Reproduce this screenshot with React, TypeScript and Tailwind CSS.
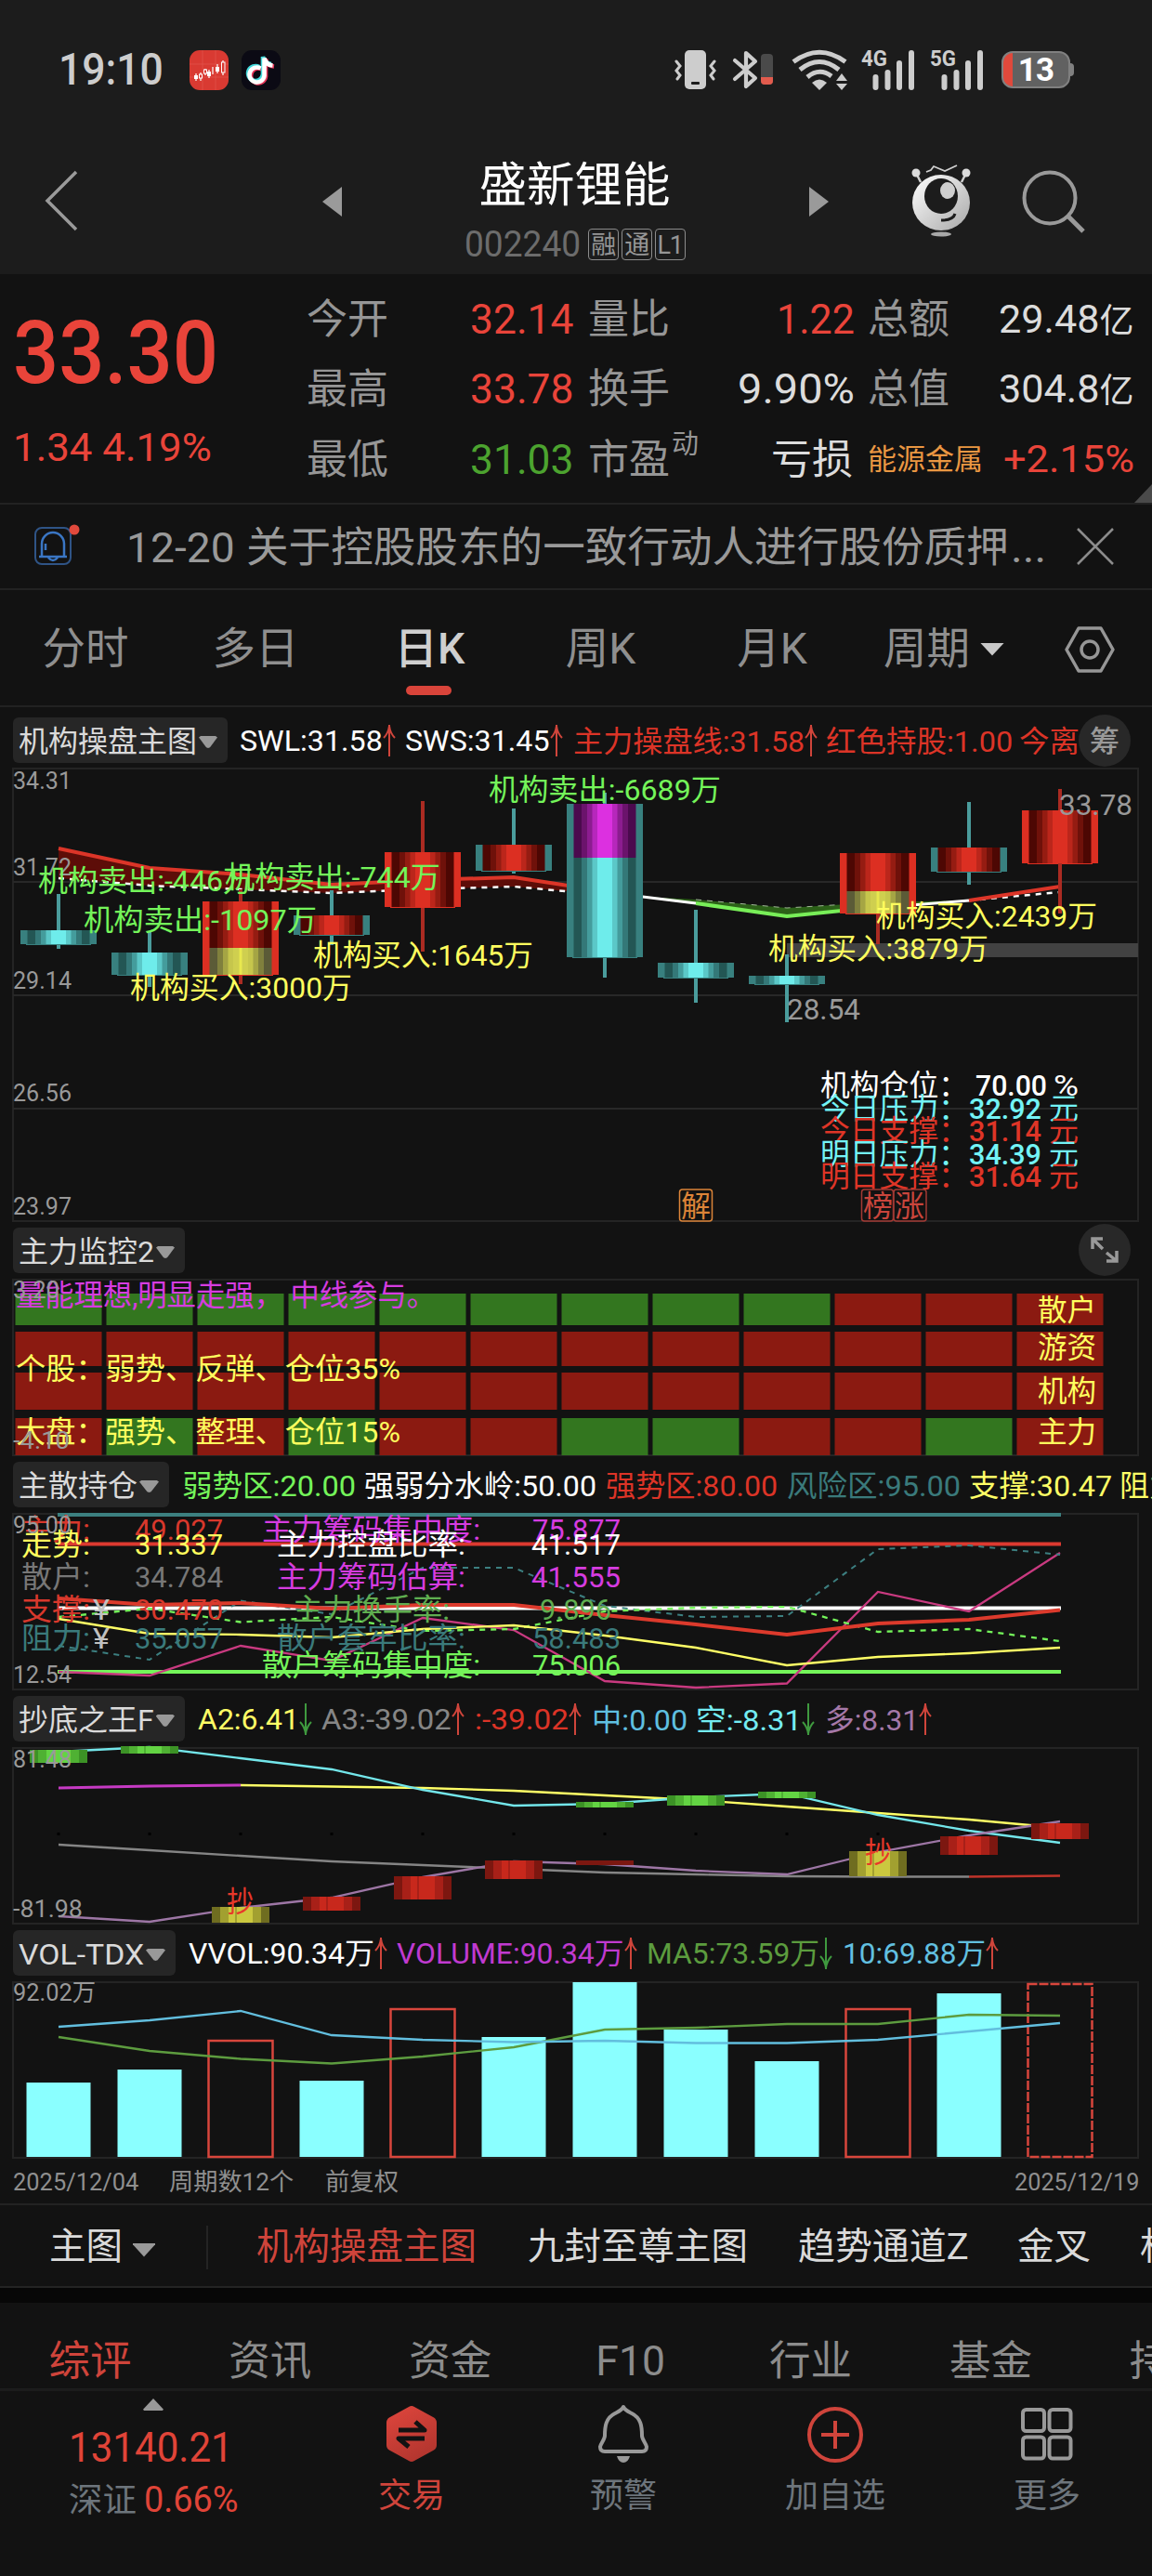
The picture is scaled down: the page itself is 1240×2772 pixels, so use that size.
import { useLayoutEffect, useRef, type ReactNode } from "react";

const XS = [63, 161, 259, 357, 455, 553, 651, 749, 847, 945, 1043, 1141];

/** Text squeezed or stretched horizontally so that it fills the width of its box. */
function Fit({ className = "", children }: { className?: string; children: ReactNode }) {
  const box = useRef<HTMLDivElement>(null);
  const inner = useRef<HTMLSpanElement>(null);
  useLayoutEffect(() => {
    const b = box.current;
    const i = inner.current;
    if (b && i && i.offsetWidth) {
      i.style.transform = `scaleX(${b.clientWidth / i.offsetWidth})`;
    }
  }, []);
  return (
    <div ref={box} className={`shrink-0 whitespace-nowrap ${className}`}>
      <span ref={inner} className="inline-block origin-left">
        {children}
      </span>
    </div>
  );
}

function StatusBar() {
  return (
    <div className="flex h-[150px] items-center pl-[63px] pr-[84px] text-[#cdcdcd]">
      <Fit className="w-[113px] text-[48px] leading-none font-medium">19:10</Fit>
      <svg className="ml-[28px] shrink-0" width="42" height="43" viewBox="0 0 42 43">
        <rect width="42" height="43" rx="11" fill="#d93a32" />
        <path d="M0 15H42M0 29H42M14 0V43M28 0V43" stroke="#e2574e" strokeWidth="0.7" />
        <path d="M5 27h4v4H5zM19 23h4v5h-4zM28 18h4v5h-4z" fill="#fff" />
        <path d="M7 25v8M12 24v9M17 20v7M21 21v9M25 18v8M30 15v10M36 11v16" stroke="#fff" strokeWidth="1.2" />
        <rect x="10.500" y="26" width="3" height="4" fill="#d93a32" stroke="#fff" />
        <rect x="15.500" y="21" width="3" height="4" fill="#d93a32" stroke="#fff" />
        <rect x="34.500" y="13" width="3.500" height="11" fill="#d93a32" stroke="#fff" />
      </svg>
      <svg className="ml-[14px] shrink-0" width="42" height="43" viewBox="0 0 42 43">
        <rect width="42" height="43" rx="11" fill="#0b0a14" />
        <g fill="none" strokeWidth="4.600">
          <path d="M20 19a8 8 0 1 0 4 8V8c1 5 4 7.500 9 8" stroke="#e8375b" transform="translate(2 1.500)" />
          <path d="M20 19a8 8 0 1 0 4 8V8c1 5 4 7.500 9 8" stroke="#43d9dc" transform="translate(-1 -1)" />
          <path d="M20 19a8 8 0 1 0 4 8V8c1 5 4 7.500 9 8" stroke="#fff" transform="translate(.5 .5)" />
        </g>
      </svg>
      <div className="ml-auto flex items-center">
        <svg width="46" height="44" viewBox="0 0 46 44" fill="none" stroke="#cdcdcd" strokeWidth="3" strokeLinecap="round">
          <path d="M2 13l4 5-4 5 4 5-3 4M43 13l-4 5 4 5-4 5 3 4" />
          <rect x="11" y="1" width="23" height="42" rx="5" fill="#cdcdcd" stroke="none" />
          <rect x="18" y="35" width="9" height="3" rx="1" fill="#1c1c1c" stroke="none" />
        </svg>
        <svg className="ml-[16px]" width="46" height="44" viewBox="0 0 46 44" fill="none">
          <path d="M3 12L25 31L15 40V4L25 13L3 32" stroke="#cdcdcd" strokeWidth="4.200" strokeLinejoin="round" strokeLinecap="round" />
          <rect x="31" y="5" width="13" height="33" rx="4" fill="#4a4a4a" />
          <path d="M31 30h13v4a4 4 0 0 1-4 4h-5a4 4 0 0 1-4-4z" fill="#e25b4d" />
        </svg>
        <svg className="ml-[18px]" width="62" height="44" viewBox="0 0 62 44" fill="none" stroke="#cdcdcd" strokeWidth="5">
          <path d="M2 13.500Q30 -7 58 13.500" />
          <path d="M9 22Q30 5 51 22" />
          <path d="M17 30Q30 19 43 29" />
          <path d="M22 36Q30 29 38 36L30 44Z" fill="#cdcdcd" stroke="none" />
          <path d="M48 34l6-8 6 8zM48 37l6 7 6-7z" fill="#cdcdcd" stroke="none" />
        </svg>
        <Signal label="4G" />
        <Signal label="5G" />
        <div className="ml-[16px] flex items-center">
          <div className="flex h-[40px] w-[74px] items-center justify-center overflow-hidden rounded-[12px] border-2 border-[#808080] bg-[linear-gradient(90deg,#e0493c_0_10px,#616161_10px)]">
            <span className="text-[35px] leading-none font-bold tracking-tight text-white">13</span>
          </div>
          <div className="h-[14px] w-[4px] rounded-r bg-[#808080]" />
        </div>
      </div>
    </div>
  );
}

function Signal({ label }: { label: string }) {
  return (
    <svg className="ml-[12px] overflow-visible" width="62" height="44" viewBox="0 0 62 44" fill="#cdcdcd">
      <text x="1" y="18" textLength="28" lengthAdjust="spacingAndGlyphs" className="text-[24px] font-bold">{label}</text>
      <rect x="13.500" y="27" width="6" height="17" rx="3" />
      <rect x="26.500" y="22" width="6" height="22" rx="3" />
      <rect x="39" y="12" width="6" height="32" rx="3" />
      <rect x="52" y="1" width="6" height="43" rx="3" />
    </svg>
  );
}

function Badge({ children }: { children: ReactNode }) {
  return (
    <span className="flex h-[34px] w-[33px] items-center justify-center rounded-[4px] border border-[#8c8c8c] pt-[2px] text-[27px] leading-none tracking-tighter text-[#969696]">
      {children}
    </span>
  );
}

function TitleBar() {
  return (
    <div className="flex h-[145px] items-start">
      <svg className="mt-[33px] ml-[46px]" width="40" height="66" viewBox="0 0 40 66" fill="none" stroke="#9a9a9a" strokeWidth="3.500">
        <path d="M36 2L5 33L36 64" />
      </svg>
      <svg className="mt-[51px] ml-[261px]" width="22" height="32" viewBox="0 0 22 32">
        <path d="M21 0V32L0 16Z" fill="#9a9a9a" />
      </svg>
      <div className="mx-auto flex flex-col items-center pr-[2px]">
        <div className="mt-[23px] text-[51.500px] leading-[54px] text-white">盛新锂能</div>
        <div className="mt-[19px] flex h-[34px] items-center gap-[3px]">
          <Fit className="mr-[5px] w-[125px] text-[38px] leading-none text-[#6c6c6c]">002240</Fit>
          <Badge>融</Badge>
          <Badge>通</Badge>
          <Badge>L1</Badge>
        </div>
      </div>
      <svg className="mt-[51px]" width="22" height="32" viewBox="0 0 22 32">
        <path d="M1 0V32L22 16Z" fill="#9a9a9a" />
      </svg>
      <svg className="mt-[26px] ml-[88px]" width="66" height="80" viewBox="0 0 66 80">
        <defs>
          <linearGradient id="bot" x1="0" y1="0" x2="1" y2="1">
            <stop offset="0" stopColor="#fff" />
            <stop offset="1" stopColor="#a8a8a8" />
          </linearGradient>
        </defs>
        <g fill="none" stroke="#d0d0d0" strokeWidth="2.500">
          <path d="M17 9l5-2 3-4 12 5 13-6" strokeWidth="1.800" />
          <path d="M6 10l5 10M60 10l-5 10" />
        </g>
        <circle cx="6" cy="10" r="4.500" fill="#dcdcdc" />
        <circle cx="60" cy="10" r="4.500" fill="#dcdcdc" />
        <ellipse cx="33" cy="42" rx="31" ry="30" fill="url(#bot)" />
        <ellipse cx="33" cy="35" rx="18" ry="19" fill="#1c1c1c" />
        <ellipse cx="40" cy="29" rx="8" ry="9" fill="#cfcfcf" />
        <path d="M33 61q13 0 15-7" fill="none" stroke="#1c1c1c" strokeWidth="3" />
        <ellipse cx="33" cy="76" rx="11" ry="2.500" fill="#a8a8a8" />
      </svg>
      <svg className="mt-[32px] mr-[71px] ml-[53px]" width="70" height="70" viewBox="0 0 70 70" fill="none" stroke="#9a9a9a" strokeWidth="4">
        <circle cx="31" cy="31" r="27.500" />
        <path d="M50 50L67 67" strokeWidth="5" />
      </svg>
    </div>
  );
}

const RED = "text-[#e9443a]";
const WHT = "text-[#dcdcdc]";

function QuoteRow({ children }: { children: ReactNode }) {
  return <div className="flex h-[75.500px] items-center leading-none">{children}</div>;
}

function Quote() {
  return (
    <div className="relative flex h-[248px] border-b-2 border-[#222]">
      <div className="w-[330px] pl-[14px]">
        <Fit className={`mt-[39px] w-[221px] text-[94px] leading-[93px] font-medium ${RED}`}>33.30</Fit>
        <Fit className={`mt-[33px] w-[214px] text-[43px] leading-[43px] ${RED}`}>1.34 4.19%</Fit>
      </div>
      <div className="flex-1 pt-[11px] text-[44px] text-[#969696]">
        <QuoteRow>
          <span className="w-[176px]">今开</span>
          <Fit className={`w-[112px] ${RED}`}>32.14</Fit>
          <span className="ml-[15px] w-[203px]">量比</span>
          <Fit className={`w-[84px] ${RED}`}>1.22</Fit>
          <span className="ml-[14px] w-[141px]">总额</span>
          <Fit className={`w-[146px] text-[42px] ${WHT}`}>
            29.48<span className="text-[36px]">亿</span>
          </Fit>
        </QuoteRow>
        <QuoteRow>
          <span className="w-[176px]">最高</span>
          <Fit className={`w-[112px] ${RED}`}>33.78</Fit>
          <span className="ml-[15px] w-[161px]">换手</span>
          <Fit className={`w-[126px] ${WHT}`}>9.90%</Fit>
          <span className="ml-[14px] w-[141px]">总值</span>
          <Fit className={`w-[146px] text-[42px] ${WHT}`}>
            304.8<span className="text-[36px]">亿</span>
          </Fit>
        </QuoteRow>
        <QuoteRow>
          <span className="w-[176px]">最低</span>
          <Fit className="w-[112px] text-[#4ca32f]">31.03</Fit>
          <span className="ml-[15px] flex w-[197px]">
            市盈<span className="-mt-[9px] ml-[2px] text-[29px]">动</span>
          </span>
          <span className={`w-[90px] ${WHT}`}>亏损</span>
          <span className="ml-[14px] w-[146px] text-[31px] text-[#ea9742]">能源金属</span>
          <Fit className={`w-[141px] text-[40px] ${RED}`}>+2.15%</Fit>
        </QuoteRow>
      </div>
      <div className="absolute right-0 bottom-0 h-[20px] w-[19px] bg-[#4a4a4a] [clip-path:polygon(100%_0,100%_100%,0_100%)]" />
    </div>
  );
}

function Notice() {
  return (
    <div className="flex h-[92px] items-center border-b-2 border-[#222]">
      <svg className="ml-[36px]" width="52" height="50" viewBox="0 0 52 50" fill="none" stroke="#3a76c4" strokeWidth="2.500">
        <rect x="2" y="5" width="38" height="39" rx="7" stroke="#2f5486" strokeWidth="2" />
        <path d="M6 36h30M9 35V22a12 12 0 0 1 24 0v13M16 37q5 6 10 0M13 29v-7" />
        <circle cx="44" cy="7" r="5.500" fill="#e0493c" stroke="none" />
      </svg>
      <div className="ml-[48px] flex items-center pt-[3px] text-[45.600px] leading-none text-[#999]">
        <Fit className="w-[117px] text-[45px]">12-20</Fit>
        <span className="ml-[12px]">关于控股股东的一致行动人进行股份质押</span>
        <Fit className="ml-[2px] w-[38px]">...</Fit>
      </div>
      <svg className="ml-[33px]" width="40" height="40" viewBox="0 0 40 40" fill="none" stroke="#8c8c8c" strokeWidth="2.500">
        <path d="M1 1L39 39M39 1L1 39" />
      </svg>
    </div>
  );
}

function PeriodTabs() {
  return (
    <div className="flex h-[126px] items-center border-b-2 border-[#222] pt-[3px] text-[46.500px] leading-none text-[#8f8f8f]">
      <span className="w-[184px] text-center">分时</span>
      <span className="w-[182px] text-center">多日</span>
      <span className="relative w-[193px] text-center font-medium text-[#cfcfcf]">
        日K
        <i className="absolute top-[63px] left-[71px] h-[10px] w-[49px] rounded-full bg-[#d9443a]" />
      </span>
      <span className="w-[175px] text-center">周K</span>
      <span className="w-[194px] text-center">月K</span>
      <span className="ml-[23px] w-[104px]">周期</span>
      <i className="h-[14px] w-[26px] bg-[#c8c8c8] [clip-path:polygon(0_0,100%_0,50%_100%)]" />
      <svg className="ml-[64px]" width="56" height="52" viewBox="0 0 56 52" fill="none" stroke="#969696" strokeWidth="3.500" strokeLinejoin="round">
        <path d="M16 3H40L53 26L40 49H16L3 26Z" />
        <circle cx="28" cy="26" r="9" />
      </svg>
    </div>
  );
}

function Name({ className, children }: { className: string; children: ReactNode }) {
  return (
    <div className={`flex h-[49px] shrink-0 items-center justify-between rounded-[6px] bg-[#262626] pr-[11px] pl-[6px] text-[#dadada] ${className}`}>
      <Fit className="flex-1 pt-[2px]">{children}</Fit>
      <i className="mt-[4px] ml-[2px] h-[13px] w-[21px] bg-[#999] [clip-path:polygon(10%_0,90%_0,100%_12%,60%_95%,50%_100%,40%_95%,0_12%)]" />
    </div>
  );
}

function Arrow({ down = false }: { down?: boolean }) {
  return (
    <svg className={`shrink-0 ${down ? "rotate-180" : ""}`} width="14" height="34" viewBox="0 0 14 34" fill="none" stroke={down ? "#3f9a3f" : "#d0453b"} strokeWidth="2">
      <path d="M7 0V34M1 14Q6 9 7 1Q8 9 13 14" />
    </svg>
  );
}

function HeadRow({ children }: { children: ReactNode }) {
  return <div className="flex h-[49px] w-full items-center pl-[14px] text-[32px] leading-none">{children}</div>;
}

const CYAN = ["#6eeceb", "#5bc8c8", "#449c9c", "#347878", "#235654"];
const REDS = ["#dc2f22", "#bb261b", "#951c12", "#6f110a", "#4d0703"];
const PURP = ["#dc30e0", "#b727bc", "#8c1c90", "#6b136c", "#4b0a4e"];
const GOLD = ["#cfcf4f", "#c6c64c", "#a5a544", "#80803d", "#5b5b37"];

function Shaded({ x, y, h, shades }: { x: number; y: number; h: number; shades: string[] }) {
  return (
    <g>
      {[33.500, 25, 19, 13.500, 8].map((r, i) => (
        <rect key={r} x={x - r} y={y} width={r * 2} height={h} fill={shades[4 - i]} />
      ))}
    </g>
  );
}

type Part = [number, number, string[]];
const CANDLES: { wick: [number, number]; edge: "c" | "r"; parts: Part[] }[] = [
  { wick: [962, 1021], edge: "c", parts: [[1001, 1016, CYAN]] },
  { wick: [1003, 1062], edge: "c", parts: [[1025, 1049, CYAN]] },
  { wick: [957, 1059], edge: "r", parts: [[970, 1020, REDS], [1020, 1049, GOLD]] },
  { wick: [958, 1017], edge: "c", parts: [[985, 1006, REDS]] },
  { wick: [862, 1024], edge: "r", parts: [[917, 976, REDS]] },
  { wick: [870, 940], edge: "c", parts: [[909, 937, REDS]] },
  { wick: [853, 1052], edge: "c", parts: [[865, 923, PURP], [923, 1030, CYAN]] },
  { wick: [979, 1079], edge: "c", parts: [[1036, 1052, CYAN]] },
  { wick: [1027, 1100], edge: "c", parts: [[1050, 1059, CYAN]] },
  { wick: [918, 1016], edge: "r", parts: [[918, 959, REDS], [959, 983, GOLD]] },
  { wick: [863, 952], edge: "c", parts: [[912, 938, REDS]] },
  { wick: [849, 983], edge: "r", parts: [[872, 929, REDS]] },
];

function T({ x, x2, y, c, s = 32, w = 400, children }: { x: number; x2: number; y: number; c: string; s?: number; w?: number; children: string }) {
  return (
    <text x={x} y={y} fill={c} fontSize={s} fontWeight={w} textLength={x2 - x} lengthAdjust="spacingAndGlyphs">
      {children}
    </text>
  );
}

function Axis({ x2 = 77, y, children }: { x2?: number; y: number; children: string }) {
  return <T x={14} x2={x2} y={y} c="#999" s={26}>{children}</T>;
}

function Frame({ top, bottom }: { top: number; bottom: number }) {
  return <rect x="14" y={top} width="1211" height={bottom - top} fill="none" stroke="#242424" strokeWidth="2" />;
}

const line = (ys: number[], from = 0) => ys.map((y, i) => `${XS[from + i]},${y}`).join(" ");

const TRADES: [number, number, number, string, string][] = [
  [526, 776, 861, "#74f55a", "机构卖出:-6689万"],
  [41, 272, 958.500, "#74f55a", "机构卖出:-446万"],
  [242, 474, 954.500, "#74f55a", "机构卖出:-744万"],
  [90, 341, 1000.500, "#74f55a", "机构卖出:-1097万"],
  [140, 379, 1074, "#ffff5e", "机构买入:3000万"],
  [337, 574, 1038.500, "#ffff5e", "机构买入:1645万"],
  [943, 1181, 996.500, "#ffff5e", "机构买入:2439万"],
  [827, 1064, 1031.500, "#ffff5e", "机构买入:3879万"],
];

const LEVELS: [string, string, string, number, string][] = [
  ["机构仓位：", "70.00", "%", 1179, "#ffffff"],
  ["今日压力：", "32.92", "元", 1204, "#73f3f6"],
  ["今日支撑：", "31.14", "元", 1228, "#df3527"],
  ["明日压力：", "34.39", "元", 1253, "#73f3f6"],
  ["明日支撑：", "31.64", "元", 1277, "#df3527"],
];

function MainChart() {
  return (
    <svg className="block" width="1240" height="494" viewBox="0 826 1240 494">
      <Frame top={827} bottom={1314} />
      <path d="M14 949H1225M14 1071H1225M14 1193H1225" stroke="#282828" strokeWidth="2" />
      <rect x="847" y="1015" width="378" height="15" fill="#424242" />
      <path d="M63 913L161 934L259 941L357 952L455 947L553 944L651 959V963L610 959L553 954L455 957L357 961L259 957L161 953L63 945Z" fill="#5d0d08" />
      <polyline points={line([945, 953, 957, 961, 957, 954, 963])} fill="none" stroke="#fff" strokeWidth="2.500" strokeDasharray="6 6" />
      <polyline points={line([913, 934, 941, 952, 947, 944, 959])} fill="none" stroke="#dc3528" strokeWidth="4" />
      <path d="M692 965L749 968L847 977L945 971L1043 969L945 976L847 986L749 972Z" fill="#2c6118" />
      <path d="M749 968L847 977L945 971" fill="none" stroke="#9fb695" strokeWidth="1" strokeDasharray="6 6" />
      <path d="M651 960L749 972M945 977L1043 969" stroke="#fff" strokeWidth="3" />
      <path d="M749 972L847 986L945 976" fill="none" stroke="#78ee58" strokeWidth="4" />
      <path d="M1043 969L1141 960" stroke="#fff" strokeWidth="2.500" strokeDasharray="6 6" />
      <path d="M1043 969L1141 954" stroke="#dc3528" strokeWidth="4" />
      {CANDLES.map((k, i) => {
        const x = XS[i];
        const top = k.parts[0][0];
        const bot = k.parts[k.parts.length - 1][1];
        const edge = k.edge === "c" ? "#38807f" : "#dc2f22";
        return (
          <g key={x}>
            <rect x={x - 2} y={k.wick[0]} width="4" height={k.wick[1] - k.wick[0]} fill={k.edge === "c" ? "#4a9c9c" : "#ab2b22"} />
            <rect x={x - 41} y={top} width="82" height={bot - top} fill={edge} />
            <path d={`M${x - 35} ${bot + 0.5}H${x + 35}`} stroke={edge} />
            {k.parts.map((p) => (
              <Shaded key={p[0]} x={x} y={p[0]} h={p[1] - p[0]} shades={p[2]} />
            ))}
          </g>
        );
      })}
      <path d="M259 1020V1049M945 959V983" stroke="#e8e84e" strokeWidth="3" />
      <rect x="1139" y="929" width="4" height="54" fill="#ab2b22" />
      <Axis y={849}>34.31</Axis>
      <Axis y={942}>31.72</Axis>
      <Axis y={1064}>29.14</Axis>
      <Axis y={1185}>26.56</Axis>
      <Axis y={1307}>23.97</Axis>
      <T x={1140} x2={1219} y={877} c="#999" s={31}>33.78</T>
      <T x={847} x2={926} y={1097} c="#999" s={31}>28.54</T>
      {TRADES.map(([x, x2, y, c, t]) => <T key={t} x={x} x2={x2} y={y} c={c}>{t}</T>)}
      {LEVELS.map(([a, b, u, y, c], i) => (
        <g key={a}>
          <T x={883} x2={1042} y={y} c={c}>{a}</T>
          <T x={i ? 1043 : 1050} x2={i ? 1121 : 1127} y={y} c={c} w={500}>{b}</T>
          <T x={i ? 1129 : 1134} x2={1161} y={y} c={c}>{u}</T>
        </g>
      ))}
      <g fill="none" strokeWidth="1.500">
        <rect x="731.500" y="1280" width="35" height="34" rx="3" stroke="#dc8438" />
        <rect x="927.500" y="1280" width="34" height="34" rx="3" stroke="#a33a34" />
        <rect x="962" y="1280" width="35" height="34" rx="3" stroke="#a33a34" />
      </g>
      <T x={733} x2={765} y={1309} c="#dc8438" s={32}>解</T>
      <T x={929} x2={961} y={1309} c="#c9453c" s={32}>榜</T>
      <T x={963} x2={995} y={1309} c="#c9453c" s={32}>涨</T>
    </svg>
  );
}

const GRID: [number, number, string][] = [
  [1392, 34, "GGGGGGGGGRRR"],
  [1433, 37, "RRRRRRRRRRRR"],
  [1477, 40, "RRRRRRRRRRRR"],
  [1526, 40, "RGRGRRGGRRGR"],
];

function MonitorChart() {
  return (
    <svg className="block" width="1240" height="197" viewBox="0 1376 1240 197">
      <Frame top={1377} bottom={1566} />
      {GRID.map(([y, h, row]) =>
        row.split("").map((k, i) => <rect key={`${y}-${i}`} x={16.500 + i * 98} y={y} width="93" height={h} fill={k === "G" ? "#33761f" : "#8b1a11"} />),
      )}
      {(["散户", "游资", "机构", "主力"] as const).map((t, i) => (
        <T key={t} x={1117} x2={1180} y={[1421, 1461, 1508, 1552][i]} c="#ffff5e">{t}</T>
      ))}
      <T x={17} x2={469} y={1405} c="#d63ce0">量能理想,明显走强， 中线参与。</T>
      <T x={17} x2={431} y={1484} c="#ffff5e">个股：弱势、反弹、仓位35%</T>
      <T x={17} x2={431} y={1552} c="#ffff5e">大盘：强势、整理、仓位15%</T>
      <Axis x2={64} y={1397}>3.20</Axis>
      <Axis x2={75} y={1558.500}>-4.10</Axis>
    </svg>
  );
}

const TEAL = "#3a7a7b";
const MAG = "#d63ce0";
const HOLD: [number, number, number, string, string][] = [
  [23, 97, 1657, "#d8382c", "主力:"], [145, 240, 1657, "#d8382c", "49.027"],
  [23, 97, 1673, "#ffff5e", "走势:"], [145, 240, 1673, "#ffff5e", "31.337"],
  [23, 97, 1708, "#777777", "散户:"], [145, 240, 1708, "#777777", "34.784"],
  [23, 97, 1743, "#d8382c", "支撑:"], [145, 240, 1743, "#d8382c", "30.470"],
  [23, 97, 1774, TEAL, "阻力:"], [145, 240, 1774, TEAL, "35.057"],
  [100, 118, 1743, "#c0c0c0", "¥"], [100, 118, 1774, "#c0c0c0", "¥"],
  [282, 517, 1657, MAG, "主力筹码集中度:"], [573, 668, 1657, MAG, "75.877"],
  [298, 501, 1673, "#ffffff", "主力控盘比率:"], [572, 668, 1673, "#ffffff", "41.517"],
  [298, 501, 1708, MAG, "主力筹码估算:"], [572, 668, 1708, MAG, "41.555"],
  [315, 484, 1743, "#5fae50", "主力换手率:"], [581, 658, 1743, "#5fae50", "9.896"],
  [298, 501, 1774, TEAL, "散户套牢比率:"], [573, 668, 1774, TEAL, "58.483"],
  [282, 517, 1803, "#74f55a", "散户筹码集中度:"], [573, 668, 1803, "#74f55a", "75.006"],
];

function HoldingChart() {
  return (
    <svg className="block" width="1240" height="197" viewBox="0 1628 1240 197" fill="none">
      <Frame top={1629} bottom={1818} />
      <g strokeWidth="4">
        <path d="M62 1630H1142" stroke="#3c8080" />
        <path d="M62 1661.500H1142" stroke="#dc3a30" />
        <path d="M62 1730.500H1142" stroke="#fff" />
        <path d="M62 1799H1142" stroke="#74f55a" />
      </g>
      <polyline points={line([1799, 1803, 1771, 1787, 1741, 1754, 1809, 1816, 1811.500, 1713, 1734, 1671])} stroke="#c93a80" strokeWidth="2.300" />
      <polyline points={line([1771, 1786, 1722.500, 1737, 1687, 1687, 1728, 1740, 1739, 1667, 1663, 1673])} stroke="#3c7f80" strokeWidth="2" strokeDasharray="6 6" />
      <polyline points={line([1740, 1731, 1745.500, 1740, 1755, 1753, 1734, 1730, 1729, 1756, 1753, 1766])} stroke="#74f55a" strokeWidth="2.300" strokeDasharray="6 6" />
      <polyline points={line([1742, 1758, 1759, 1762, 1753, 1749, 1760, 1773, 1792, 1783, 1779, 1773])} stroke="#ffff66" strokeWidth="2.300" />
      <polyline points={line([1720, 1727, 1725, 1731, 1727, 1727, 1738, 1748, 1759, 1747, 1743, 1732.500])} stroke="#dc3a2c" strokeWidth="4" />
      {HOLD.map(([x, x2, y, c, t]) => <T key={t + y} x={x} x2={x2} y={y} c={c}>{t}</T>)}
      <Axis y={1650}>95.00</Axis>
      <Axis y={1811}>12.54</Axis>
    </svg>
  );
}

const BOX_COLORS: Record<string, string[]> = {
  g: ["#3c9226", "#4fb133", "#63d443"],
  r: ["#7c1710", "#a82018", "#c8281c"],
  y: ["#6f6d20", "#a2a030", "#cbc83f"],
  d: ["#7c1710", "#7c1710", "#7c1710"],
};
const BOXES: [number, number, number, string][] = [
  [0, 1883, 1897, "g"], [1, 1879, 1887, "g"], [6, 1939, 1945, "g"], [7, 1932, 1943, "g"], [8, 1928, 1935, "g"],
  [3, 2041, 2056, "r"], [4, 2019, 2044, "r"], [5, 2002, 2022, "r"], [6, 2002, 2007, "d"], [10, 1976, 1996, "r"], [11, 1962, 1979, "r"],
  [2, 2052, 2069, "y"], [9, 1992, 2019, "y"],
];

function BottomKingChart() {
  return (
    <svg className="block" width="1240" height="201" viewBox="0 1876 1240 201" fill="none">
      <Frame top={1881} bottom={2070} />
      {XS.map((x) => <rect key={x} x={x - 1.500} y="1972" width="3" height="3" fill="#000" />)}
      <polyline points={line([1985, 1991, 1997, 2003, 2007, 2011, 2015, 2017, 2019, 2019.500, 2019.500])} stroke="#858585" strokeWidth="2.300" />
      <path d="M1043 2019.500L1141 2018.500" stroke="#c0342a" strokeWidth="2.300" />
      <polyline points={line([1921, 1922.500, 1924, 1927, 1932, 1937, 1944, 1951, 1958, 1967], 2)} stroke="#ffff66" strokeWidth="2.300" />
      <path d="M63 1924L161 1922L259 1921" stroke="#c63ac4" strokeWidth="3" />
      <polyline points={line([1885, 1880, 1892, 1904, 1926, 1943, 1941, 1934, 1930, 1953, 1970, 1983])} stroke="#73e6ea" strokeWidth="2.300" />
      <polyline points={line([2062, 2068, 2053, 2042, 2020, 2003, 2006, 2013, 2017, 1993, 1975, 1960])} stroke="#9d76a5" strokeWidth="2.300" />
      {BOXES.map(([i, a, b, k]) => (
        <g key={`${i}${a}`}>
          {[31, 22, 13].map((r, n) => <rect key={r} x={XS[i] - r} y={a} width={r * 2} height={b - a} fill={BOX_COLORS[k][n]} />)}
          {k !== "d" && <path d={`M${XS[i] - 5} ${a}V${b}M${XS[i] + 17} ${a}V${b}`} stroke={BOX_COLORS[k][1]} strokeWidth="2" />}
        </g>
      ))}
      <T x={244} x2={273} y={2057} c="#e8382a" s={31}>抄</T>
      <T x={931} x2={960} y={2004} c="#e8382a" s={31}>抄</T>
      <Axis y={1902}>81.48</Axis>
      <Axis x2={89} y={2063}>-81.98</Axis>
    </svg>
  );
}

const VOLS = [2241, 2227, 2195, 2239, 2161, 2192, 2133, 2184, 2218, 2161, 2145, 2134];

function VolumeChart() {
  return (
    <svg className="block" width="1240" height="193" viewBox="0 2131 1240 193" fill="none">
      <Frame top={2133} bottom={2322} />
      {VOLS.map((y, i) =>
        [2, 4, 9, 11].includes(i) ? (
          <rect key={i} x={XS[i] - 34.500} y={y + 1} width="69" height={2320 - y} stroke="#d8463c" strokeWidth="2.500" strokeDasharray={i === 11 ? "10 2" : undefined} />
        ) : (
          <rect key={i} x={XS[i] - 34.500} y={y} width="69" height={2321 - y} fill="#8affff" />
        ),
      )}
      <polyline points={line([2192, 2207, 2215.500, 2220.500, 2213, 2203, 2184, 2182, 2178, 2178, 2168, 2169])} stroke="#5d9c3f" strokeWidth="2.300" />
      <polyline points={line([2181, 2174, 2164, 2190, 2195, 2197.500, 2196, 2198.500, 2198.500, 2195, 2186, 2177])} stroke="#62bede" strokeWidth="2.300" />
      <Axis x2={103} y={2153}>92.02万</Axis>
    </svg>
  );
}

function Charts() {
  return (
    <div className="flex flex-col">
      <div className="mt-[11px] mb-[5px]">
        <HeadRow>
          <Name className="w-[231px]">机构操盘主图</Name>
          <Fit className="ml-[13px] w-[154px] text-white">SWL:31.58</Fit>
          <Arrow />
          <Fit className="ml-[10px] w-[156px] text-white">SWS:31.45</Fit>
          <Arrow />
          <Fit className="ml-[11px] w-[249px] pt-[2px] text-[#dc3427]">主力操盘线:31.58</Fit>
          <Arrow />
          <Fit className="ml-[9px] w-[201px] pt-[2px] text-[#dc3427]">红色持股:1.00</Fit>
          <Fit className="ml-[7px] w-[65px] pt-[2px] text-[#dc3427]">今离</Fit>
          <div className="-ml-px -my-4 flex size-[56px] shrink-0 items-center justify-center rounded-full bg-[#282828] pt-[2px] font-medium text-[#999]">筹</div>
        </HeadRow>
      </div>
      <MainChart />
      <div className="mt-px flex h-[55px] items-start justify-between pr-[23px] pl-[14px] text-[32px] leading-none">
        <Name className="w-[185px]">主力监控2</Name>
        <div className="-mt-[4px] flex size-[56px] items-center justify-center rounded-full bg-[#282828]">
          <svg width="30" height="30" viewBox="0 0 30 30" fill="none" stroke="#999" strokeWidth="3.500">
            <path d="M2 14V3H13M2 3L13 14M17 18L28 27M28 16V27H17" />
          </svg>
        </div>
      </div>
      <MonitorChart />
      <div className="mb-[6px] overflow-hidden">
        <HeadRow>
          <Name className="w-[168px]">主散持仓</Name>
          <Fit className="ml-[14px] w-[187px] pt-[2px] text-[#74f55a]">弱势区:20.00</Fit>
          <Fit className="ml-[9px] w-[250px] pt-[2px] text-white">强弱分水岭:50.00</Fit>
          <Fit className="ml-[10px] w-[185px] pt-[2px] text-[#dc3427]">强势区:80.00</Fit>
          <Fit className="ml-[10px] w-[187px] pt-[2px] text-[#3a7a7b]">风险区:95.00</Fit>
          <Fit className="ml-[9px] w-[154px] pt-[2px] text-[#ffff66]">支撑:30.47</Fit>
          <span className="ml-[8px] shrink-0 pt-[2px] text-[#ffff66]">阻力</span>
        </HeadRow>
      </div>
      <HoldingChart />
      <div className="mb-[2px]">
        <HeadRow>
          <Name className="w-[185px]">抄底之王F</Name>
          <Fit className="ml-[14px] w-[109px] text-[#ffff66]">A2:6.41</Fit>
          <Arrow down />
          <Fit className="ml-[10px] w-[140px] text-[#868686]">A3:-39.02</Fit>
          <Arrow />
          <Fit className="ml-[11px] w-[101px] text-[#dc3427]">:-39.02</Fit>
          <Arrow />
          <Fit className="ml-[11px] w-[103px] pt-[2px] text-[#5fbfe0]">中:0.00</Fit>
          <Fit className="ml-[9px] w-[114px] pt-[2px] text-[#74ecf2]">空:-8.31</Fit>
          <Arrow down />
          <Fit className="ml-[11px] w-[101px] pt-[2px] text-[#a578a8]">多:8.31</Fit>
          <Arrow />
        </HeadRow>
      </div>
      <BottomKingChart />
      <div className="mb-[5px]">
        <HeadRow>
          <Name className="w-[175px]">VOL-TDX</Name>
          <Fit className="ml-[14px] w-[200px] pt-px text-white">VVOL:90.34万</Fit>
          <Arrow />
          <Fit className="ml-[10px] w-[245px] pt-px text-[#c03ad0]">VOLUME:90.34万</Fit>
          <Arrow />
          <Fit className="ml-[10px] w-[186px] pt-px text-[#5c9c3e]">MA5:73.59万</Fit>
          <Arrow down />
          <Fit className="ml-[11px] w-[154px] pt-px text-[#62c0e0]">10:69.88万</Fit>
          <Arrow />
        </HeadRow>
      </div>
      <VolumeChart />
      <div className="flex h-[49px] items-center border-b-2 border-[#222] px-[14px] text-[26px] leading-none text-[#8f8f8f]">
        <Fit className="w-[135px]">2025/12/04</Fit>
        <Fit className="ml-[33px] w-[134px]">周期数12个</Fit>
        <Fit className="ml-[34px] w-[79px]">前复权</Fit>
        <Fit className="ml-auto w-[134px]">2025/12/19</Fit>
      </div>
    </div>
  );
}

function SchemeBar() {
  return (
    <div className="flex h-[89px] items-center overflow-hidden border-b-2 border-[#242424] pt-[3px] pl-[53px] text-[39.500px] leading-none whitespace-nowrap text-[#dadada]">
      <span>主图</span>
      <i className="mt-[6px] ml-[11px] h-[15px] w-[24px] shrink-0 bg-[#999] [clip-path:polygon(0_0,100%_0,100%_12%,50%_100%,0_12%)]" />
      <i className="ml-[55px] h-[47px] w-[2px] shrink-0 bg-[#242424]" />
      <span className="ml-[52px] text-[#cf443b]">机构操盘主图</span>
      <span className="ml-[55px]">九封至尊主图</span>
      <Fit className="ml-[54px] w-[184px]">趋势通道Z</Fit>
      <span className="ml-[52px]">金叉</span>
      <span className="ml-[53px]">机构</span>
    </div>
  );
}

function InfoTabs() {
  return (
    <div className="flex h-[95px] items-start overflow-hidden border-b-[3px] border-[#1c1c1c] pt-[41px] text-[44.500px] leading-none whitespace-nowrap text-[#8c8c8c]">
      {["综评", "资讯", "资金", "F10", "行业", "基金", "持仓"].map((t, i) => (
        <span key={t} className={`w-[193.900px] shrink-0 text-center ${i ? "" : "text-[#cf443b]"}`}>
          {t}
        </span>
      ))}
    </div>
  );
}

function NavItem({ label, className, children }: { label: string; className: string; children: ReactNode }) {
  return (
    <div className={`flex w-[228px] shrink-0 flex-col items-center pt-[14px] text-[36px] leading-none ${className}`}>
      <svg width="64" height="64" viewBox="0 0 64 64" fill="none">
        {children}
      </svg>
      <span className="mt-[17px]">{label}</span>
    </div>
  );
}

function BottomNav() {
  return (
    <div className="flex h-[199px]">
      <div className="flex w-[329px] shrink-0 flex-col items-start pl-[74px] leading-none">
        <i className="mt-[8px] ml-[80px] h-[13px] w-[22px] bg-[#999] [clip-path:polygon(50%_0,100%_90%,95%_100%,5%_100%,0_90%)]" />
        <Fit className="mt-[18px] w-[177px] text-[44px] text-[#e04438]">13140.21</Fit>
        <div className="mt-[15px] flex items-center">
          <span className="pt-[2px] text-[36.500px] text-[#6d757c]">深证</span>
          <Fit className="ml-[8px] w-[102px] text-[39px] text-[#e04438]">0.66%</Fit>
        </div>
      </div>
      <NavItem label="交易" className="text-[#cf443b]">
        <defs>
          <linearGradient id="hex" x1="0" y1="0" x2="0.500" y2="1">
            <stop offset="0" stopColor="#e0463d" />
            <stop offset="1" stopColor="#b4362f" />
          </linearGradient>
        </defs>
        <path d="M29 3Q32 1 35 3L56 14.500Q59 16.500 59 20V44Q59 47.500 56 49.500L35 61Q32 63 29 61L8 49.500Q5 47.500 5 44V20Q5 16.500 8 14.500Z" fill="url(#hex)" />
        <path d="M18 28H46L36 19M46 37H18L29 46" stroke="#121212" strokeWidth="5" strokeLinejoin="round" />
      </NavItem>
      <NavItem label="预警" className="text-[#6d757c]">
        <path d="M32 3C34 7 37 8 41 10C51 15 52 24 52 34C52 38 56 42 57 46Q57 51 52 51H12Q7 51 7 46C8 42 12 38 12 34C12 24 13 15 23 10C27 8 30 7 32 3Z" stroke="#999" strokeWidth="4" strokeLinejoin="round" />
        <path d="M25 56H39Q37 63 32 63Q27 63 25 56Z" fill="#999" />
      </NavItem>
      <NavItem label="加自选" className="text-[#6d757c]">
        <circle cx="32" cy="33" r="28" stroke="#cf443b" strokeWidth="4" />
        <path d="M32 18V48M17 33H47" stroke="#cf443b" strokeWidth="4" />
      </NavItem>
      <NavItem label="更多" className="text-[#6d757c]">
        {[[6, 6], [34.500, 6], [6, 35.500], [34.500, 35.500]].map(([x, y]) => (
          <rect key={`${x}-${y}`} x={x} y={y} width="23" height="23" rx="3.500" stroke="#999" strokeWidth="4" />
        ))}
      </NavItem>
    </div>
  );
}

export default function App() {
  return (
    <div className="flex h-[2772px] w-[1240px] flex-col overflow-hidden bg-[#121212] font-['Roboto','Noto_Sans_CJK_SC',sans-serif]">
      <div className="bg-[#1c1c1c]">
        <StatusBar />
        <TitleBar />
      </div>
      <Quote />
      <Notice />
      <PeriodTabs />
      <Charts />
      <SchemeBar />
      <div className="h-[16px] shrink-0 bg-[#070707]" />
      <InfoTabs />
      <BottomNav />
    </div>
  );
}
